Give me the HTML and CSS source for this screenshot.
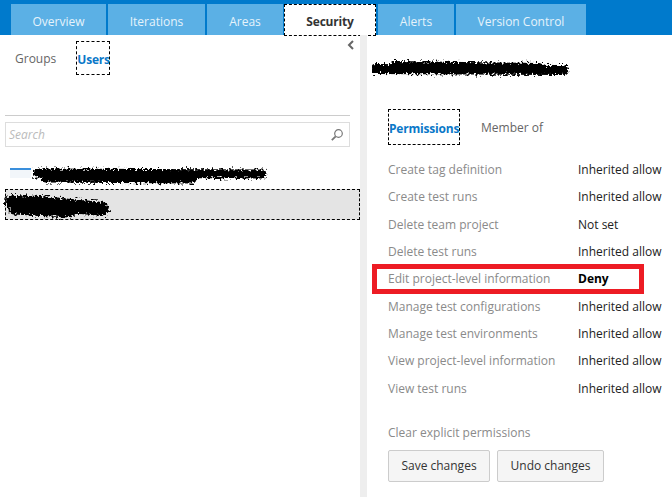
FILE: index.html
```html
<!DOCTYPE html>
<html lang="en">
<head>
    <meta charset="UTF-8">
    <meta name="viewport" content="width=device-width, initial-scale=1.0">
    <title>Security</title>
    <link rel="stylesheet" href="styles.css">
</head>
<body>
    <svg class="defs" width="0" height="0">
        <filter id="rough" filterUnits="userSpaceOnUse" x="-10" y="-10" width="300" height="60">
            <feTurbulence type="fractalNoise" baseFrequency="0.5" numOctaves="2" seed="4" result="noise"/>
            <feDisplacementMap in="SourceGraphic" in2="noise" scale="10" xChannelSelector="R" yChannelSelector="G"/>
        </filter>
    </svg>

    <nav class="tabs">
        <a class="tab tab-overview">Overview</a>
        <a class="tab tab-iterations">Iterations</a>
        <a class="tab tab-areas">Areas</a>
        <a class="tab tab-security active">Security</a>
        <a class="tab tab-alerts">Alerts</a>
        <a class="tab tab-version">Version Control</a>
    </nav>

    <div class="main">
        <aside class="left-pane">
            <svg class="collapse" width="8" height="10" viewBox="0 0 8 10">
                <path d="M6 1 L2 5 L6 9" fill="none" stroke="#666" stroke-width="2"/>
            </svg>
            <div class="pivot">
                <span class="pivot-item">Groups</span>
                <span class="pivot-item selected users">Users</span>
            </div>
            <div class="divider"></div>
            <div class="search">
                <span class="search-text">Search</span>
                <svg width="14" height="14" viewBox="0 0 14 14">
                    <circle cx="8.5" cy="5.5" r="3.8" fill="none" stroke="#777" stroke-width="1.2"/>
                    <path d="M5.7 8.3 L1.8 12.2" stroke="#777" stroke-width="1.8"/>
                </svg>
            </div>
            <div class="user-row">
                <span class="avatar"></span>
                <svg class="scribble" width="245" height="24" viewBox="0 0 245 24">
                    <g filter="url(#rough)">
                        <path d="M5 9 L230 10" stroke="#000" stroke-width="9" stroke-linecap="round"/>
                        <path d="M13 14 L160 15" stroke="#000" stroke-width="9" stroke-linecap="round"/>
                    </g>
                </svg>
            </div>
            <div class="user-row current">
                <svg class="scribble" width="114" height="32" viewBox="0 0 114 32">
                    <g filter="url(#rough)">
                        <path d="M12 13 L40 14 L102 20" stroke="#000" stroke-width="14" stroke-linecap="round"/>
                        <path d="M14 20 L70 23" stroke="#000" stroke-width="11" stroke-linecap="round"/>
                    </g>
                </svg>
            </div>
        </aside>

        <div class="splitter"></div>

        <section class="right-pane">
            <svg class="scribble title-scribble" width="204" height="26" viewBox="0 0 204 26">
                <g filter="url(#rough)">
                    <path d="M3 12 L191 13" stroke="#000" stroke-width="10" stroke-linecap="round"/>
                    <path d="M23 9 L167 11" stroke="#000" stroke-width="10" stroke-linecap="round"/>
                </g>
            </svg>
            <div class="pivot detail-pivot">
                <span class="pivot-item selected permissions">Permissions</span>
                <span class="pivot-item">Member of</span>
            </div>
            <div class="perm-list">
                <div class="perm-row"><span class="perm-name">Create tag definition</span><span class="perm-value">Inherited allow</span></div>
                <div class="perm-row"><span class="perm-name">Create test runs</span><span class="perm-value">Inherited allow</span></div>
                <div class="perm-row"><span class="perm-name">Delete team project</span><span class="perm-value">Not set</span></div>
                <div class="perm-row"><span class="perm-name">Delete test runs</span><span class="perm-value">Inherited allow</span></div>
                <div class="perm-row highlighted"><span class="perm-name">Edit project-level information</span><span class="perm-value deny">Deny</span></div>
                <div class="perm-row"><span class="perm-name">Manage test configurations</span><span class="perm-value">Inherited allow</span></div>
                <div class="perm-row"><span class="perm-name">Manage test environments</span><span class="perm-value">Inherited allow</span></div>
                <div class="perm-row"><span class="perm-name">View project-level information</span><span class="perm-value">Inherited allow</span></div>
                <div class="perm-row"><span class="perm-name">View test runs</span><span class="perm-value">Inherited allow</span></div>
            </div>
            <a class="clear-link">Clear explicit permissions</a>
            <div class="actions">
                <button class="btn btn-save">Save changes</button>
                <button class="btn btn-undo">Undo changes</button>
            </div>
        </section>
    </div>
</body>
</html>
```

FILE: styles.css
```css
* {
    margin: 0;
    padding: 0;
    box-sizing: border-box;
}

body {
    font-family: "Open Sans", "Noto Sans", sans-serif;
    font-size: 12px;
    background: #fff;
    height: 497px;
    overflow: hidden;
}

.defs {
    display: block;
    height: 0;
}

.tabs {
    display: flex;
    height: 35px;
    padding: 4px 0 0 11px;
    gap: 2px;
    background: #007acc;
}

.tab {
    display: flex;
    align-items: center;
    justify-content: center;
    padding-top: 3px;
    background: #5bb0e5;
    color: #e6f3fb;
    font-size: 12px;
}

.tab-overview { width: 95px; }
.tab-iterations { width: 97px; }
.tab-areas { width: 76px; margin-right: -1px; }
.tab-security { width: 92px; }
.tab-alerts { width: 76px; }
.tab-version { width: 130px; }

.tab.active {
    background: #fff;
    color: #333;
    font-weight: 700;
    letter-spacing: -0.2px;
    border: 1px dashed #000;
    height: 32px;
}

.main {
    display: flex;
    height: 462px;
}

.left-pane {
    position: relative;
    width: 360px;
    padding-left: 5px;
}

.collapse {
    position: absolute;
    left: 347px;
    top: 5px;
}

.splitter {
    width: 7px;
    background: #eee;
}

.pivot {
    display: flex;
    align-items: center;
    color: #666;
}

.left-pane .pivot {
    height: 34px;
    margin-top: 6px;
    padding-left: 10px;
    padding-top: 1px;
    gap: 20px;
}

.pivot-item.selected {
    display: flex;
    align-items: center;
    color: #0a78c8;
    font-weight: 700;
    letter-spacing: -0.2px;
    border: 1px dashed #000;
}

.users {
    width: 34px;
    height: 34px;
    margin-top: -1px;
    padding-top: 2px;
    white-space: nowrap;
}

.divider {
    width: 345px;
    margin-top: 40px;
    border-top: 1px solid #ccc;
}

.search {
    display: flex;
    align-items: center;
    justify-content: space-between;
    width: 345px;
    height: 25px;
    margin-top: 6px;
    padding: 0 5px 0 3px;
    border: 1px solid #ddd;
}

.search-text {
    color: #bbb;
    font-style: italic;
}

.user-row {
    display: flex;
    align-items: center;
    position: relative;
    height: 24px;
    margin-top: 17px;
    padding-left: 5px;
}

.avatar {
    align-self: flex-start;
    width: 21px;
    height: 10px;
    margin-top: 4px;
    border-top: 2px solid #3a8fdc;
    background: #f2f6fa;
}

.user-row .scribble {
    margin-left: 1px;
}

.user-row.current {
    height: 31px;
    margin-top: 1px;
    padding-left: 0;
    background: #e4e4e4;
    border: 1px dashed #000;
}

.user-row.current .scribble {
    margin-left: -6px;
}

.right-pane {
    flex: 1;
    padding-left: 5px;
}

.title-scribble {
    display: block;
    margin-top: 22px;
}

.detail-pivot {
    margin: 26px 0 0 16px;
    gap: 21px;
}

.permissions {
    width: 72px;
    height: 36px;
    padding-top: 2px;
    white-space: nowrap;
}

.perm-list {
    display: grid;
    grid-auto-rows: 27.3px;
    margin: 11px 0 0 16px;
}

.perm-row {
    display: flex;
    align-items: center;
    position: relative;
}

.perm-name {
    width: 190px;
    color: #8a8a8a;
    white-space: nowrap;
}

.perm-value {
    color: #222;
    white-space: nowrap;
}

.deny {
    font-weight: 700;
    color: #000;
}

/* red annotation drawn over the row */
.highlighted::after {
    content: "";
    position: absolute;
    box-sizing: border-box;
    left: -16px;
    top: -1px;
    width: 272px;
    height: 30px;
    border: 5px solid #ed1c24;
}

.clear-link {
    display: block;
    margin: 22px 0 0 16px;
    color: #8a8a8a;
}

.actions {
    display: flex;
    gap: 7px;
    margin: 9px 0 0 16px;
}

.btn {
    height: 32px;
    font-family: inherit;
    font-size: 12px;
    color: #333;
    background: #f5f5f5;
    border: 1px solid #ccc;
    border-radius: 2px;
}

.btn-save { width: 102px; }
.btn-undo { width: 107px; }
```
